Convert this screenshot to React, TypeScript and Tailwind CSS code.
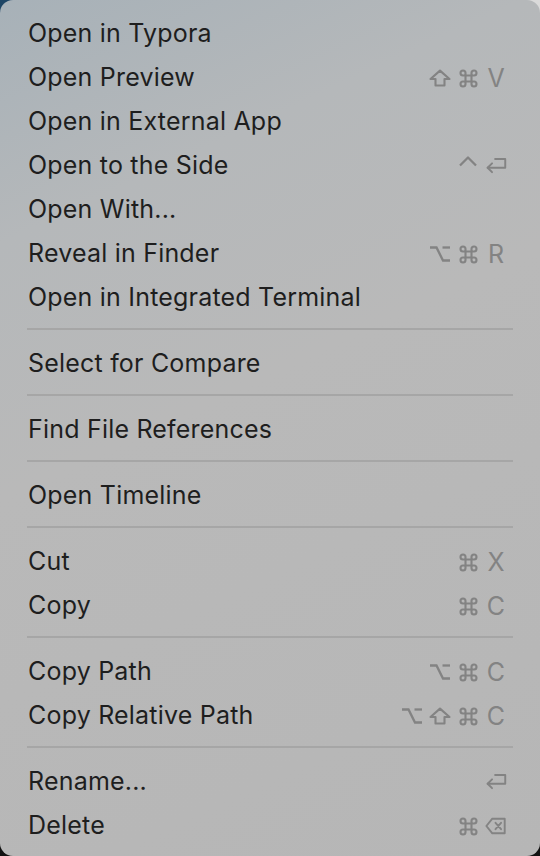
const Shift = () => (
  <svg width="22" height="18" viewBox="0 0 22 18" fill="none" stroke="currentColor" strokeWidth="2.1" strokeLinejoin="round">
    <path d="M11 1.6 L20.5 10 H15.5 V16.5 H6.5 V10 H1.5 Z" />
  </svg>
);

const Cmd = () => (
  <svg width="21" height="21" viewBox="0 0 21 21" fill="none" stroke="currentColor" strokeWidth="2.1">
    <path d="M7.5 7.5 H13.5 V13.5 H7.5 Z" />
    <path d="M7.5 7.5 V5 A2.5 2.5 0 1 0 5 7.5 H7.5" />
    <path d="M13.5 7.5 V5 A2.5 2.5 0 1 1 16 7.5 H13.5" />
    <path d="M7.5 13.5 V16 A2.5 2.5 0 1 1 5 13.5 H7.5" />
    <path d="M13.5 13.5 V16 A2.5 2.5 0 1 0 16 13.5 H13.5" />
  </svg>
);

const Opt = () => (
  <svg width="22" height="18" viewBox="0 0 22 18" fill="none" stroke="currentColor" strokeWidth="2.3">
    <path d="M1 2.5 H7.5 L14 15.5 H21" />
    <path d="M13.5 2.5 H21" />
  </svg>
);

const Ctrl = () => (
  <svg width="20" height="22" viewBox="0 0 20 22" fill="none" stroke="currentColor" strokeWidth="2.3" strokeLinejoin="round">
    <path d="M2 10.5 L10 2.5 L18 10.5" />
  </svg>
);

const Ret = () => (
  <svg width="25" height="20" viewBox="0 0 25 20" fill="none" stroke="currentColor" strokeWidth="2.2" strokeLinejoin="round" strokeLinecap="round">
    <path d="M11.5 2 H23 V12 H3" />
    <path d="M8 7 L3 12 L8 17" />
  </svg>
);

const Del = () => (
  <svg width="24" height="20" viewBox="0 0 24 20" fill="none" stroke="currentColor" strokeWidth="2.1" strokeLinejoin="round">
    <path d="M8 2 H21.5 V18 H8 L1.5 10 Z" />
    <path d="M11.5 6.5 L17.5 13.5 M17.5 6.5 L11.5 13.5" strokeLinecap="round" />
  </svg>
);

type Key = "shift" | "cmd" | "opt" | "ctrl" | "ret" | "del" | string;

const KeyGlyph = ({ k }: { k: Key }) => {
  switch (k) {
    case "shift":
      return <Shift />;
    case "cmd":
      return <Cmd />;
    case "opt":
      return <Opt />;
    case "ctrl":
      return <Ctrl />;
    case "ret":
      return <Ret />;
    case "del":
      return <Del />;
    default:
      return <span className="text-[25px] leading-none">{k}</span>;
  }
};

type Item = { label: string; keys?: Key[] };

const groups: Item[][] = [
  [
    { label: "Open in Typora" },
    { label: "Open Preview", keys: ["shift", "cmd", "V"] },
    { label: "Open in External App" },
    { label: "Open to the Side", keys: ["ctrl", "ret"] },
    { label: "Open With..." },
    { label: "Reveal in Finder", keys: ["opt", "cmd", "R"] },
    { label: "Open in Integrated Terminal" },
  ],
  [{ label: "Select for Compare" }],
  [{ label: "Find File References" }],
  [{ label: "Open Timeline" }],
  [
    { label: "Cut", keys: ["cmd", "X"] },
    { label: "Copy", keys: ["cmd", "C"] },
  ],
  [
    { label: "Copy Path", keys: ["opt", "cmd", "C"] },
    { label: "Copy Relative Path", keys: ["opt", "shift", "cmd", "C"] },
  ],
  [
    { label: "Rename...", keys: ["ret"] },
    { label: "Delete", keys: ["cmd", "del"] },
  ],
];

const Row = ({ item }: { item: Item }) => (
  <div className="flex h-[44px] items-center justify-between pl-[28px] pr-[33px]">
    <span className="text-[25px] tracking-[0.2px] text-[#1e1e1e]">{item.label}</span>
    {item.keys && (
      <div className="flex items-center gap-[6px] text-[#838383]">
        {item.keys.map((k, i) => (
          <div key={i} className="flex h-[22px] w-[22px] shrink-0 items-center justify-center">
            <KeyGlyph k={k} />
          </div>
        ))}
      </div>
    )}
  </div>
);

export default function App() {
  return (
    <div className="h-[856px] w-[540px] bg-[conic-gradient(#dadada_0deg_90deg,#121212_90deg_270deg,#1d4565_270deg_360deg)] font-['Inter',sans-serif]">
      <div className="flex h-full w-full flex-col rounded-[13px] bg-[linear-gradient(155deg,#a7b1b8_0%,#b5b8ba_22%,#b9b9b9_45%,#b6b6b6_100%)] pt-[12px] pb-[8px]">
        {groups.map((g, gi) => (
          <div key={gi}>
            {gi > 0 && (
              <div className="h-[22px] px-[27px] pt-[8px]">
                <div className="h-[2px] w-full bg-[#a6a6a6]" />
              </div>
            )}
            {g.map((item) => (
              <Row key={item.label} item={item} />
            ))}
          </div>
        ))}
      </div>
    </div>
  );
}
